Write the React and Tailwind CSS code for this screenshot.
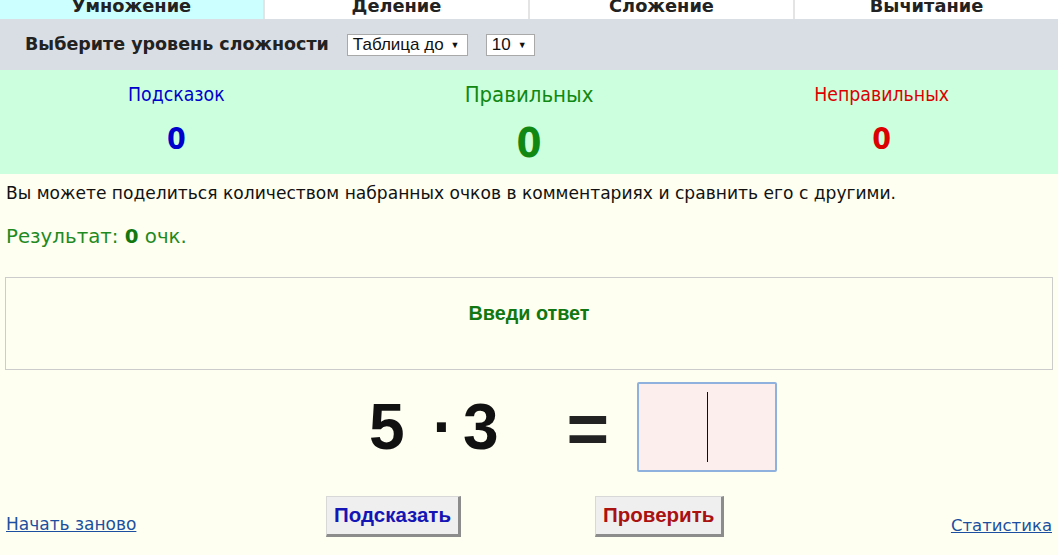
import React from "react";

const V = { fontFamily: '"DejaVu Sans", Verdana, sans-serif' };
const A = { fontFamily: '"Liberation Sans", Arial, sans-serif' };

function Tab({ label, active, last }) {
  return (
    <div
      className={`flex-1 h-[19px] overflow-hidden flex justify-center ${active ? "bg-[#ccffff]" : "bg-white"} ${last ? "" : "border-r-2 border-[#e4e4e4]"}`}
    >
      <span className="text-[17.8px] font-bold leading-[20px] -mt-[4px] text-[#222]" style={V}>
        {label}
      </span>
    </div>
  );
}

function Select({ text, w }) {
  return (
    <div
      className={`h-[22px] ${w} bg-white border border-[#a9a9a9] flex items-center pl-[5px] text-[17px] leading-[20px] text-[#111]`}
      style={A}
    >
      <span>{text}</span>
      <span className="text-[9px] ml-[7px]">▼</span>
    </div>
  );
}

function Stat({ label, value, color, big }) {
  return (
    <div className="flex-1 flex flex-col items-center">
      <div
        className={`font-stretch-condensed ${color} ${big ? "text-[22px] leading-[26px] mt-[12px]" : "text-[19.3px] leading-[22px] mt-[14px]"}`}
        style={V}
      >
        {label}
      </div>
      <div
        className={`font-bold font-stretch-condensed ${color} ${big ? "text-[40px] leading-[46px] mt-[12px]" : "text-[30px] leading-[34px] mt-[16px]"}`}
        style={V}
      >
        {value}
      </div>
    </div>
  );
}

function Btn({ children, color }) {
  return (
    <div
      className={`h-[41px] px-[7px] flex items-center bg-[#efefef] border-t border-l border-[#d8d8d8] border-r-[3px] border-b-[3px] border-r-[#8c8c8c] border-b-[#8c8c8c] text-[20.5px] font-bold ${color}`}
      style={A}
    >
      {children}
    </div>
  );
}

export default function App() {
  return (
    <div className="w-[1058px] h-[555px] overflow-hidden bg-[#fefff0]">
      <div className="flex">
        <Tab label="Умножение" active />
        <Tab label="Деление" />
        <Tab label="Сложение" />
        <Tab label="Вычитание" last />
      </div>
      <div className="h-[51px] bg-[#d9dee4] flex items-center pl-[25px]">
        <span className="text-[17.5px] font-bold text-[#222] mr-[18px]" style={V}>
          Выберите уровень сложности
        </span>
        <Select text="Таблица до" w="w-[121px]" />
        <div className="w-[18px]" />
        <Select text="10" w="w-[49px]" />
      </div>
      <div className="h-[104px] bg-[#ccffdd] flex">
        <Stat label="Подсказок" value="0" color="text-[#0000cc]" />
        <Stat label="Правильных" value="0" color="text-[#118811]" big />
        <Stat label="Неправильных" value="0" color="text-[#dd0000]" />
      </div>
      <div className="pl-[6px] pt-[8px] text-[17.1px] leading-[22px] text-[#111]" style={V}>
        Вы можете поделиться количеством набранных очков в комментариях и сравнить его с другими.
      </div>
      <div className="pl-[6px] pt-[21px] text-[19.8px] leading-[24px] text-[#1f8a1f]" style={V}>
        Результат: <b className="text-[#117711]">0</b> очк.
      </div>
      <div className="mx-[5px] mt-[28px] h-[93px] border border-[#cccccc] flex justify-center">
        <span className="mt-[21px] text-[19.8px] font-bold text-[#117711]" style={A}>
          Введи ответ
        </span>
      </div>
      <div className="flex items-center h-[90px] mt-[12px] pl-[369px]" style={A}>
        <span className="text-[64px] font-bold leading-none text-[#111]">5</span>
        <span className="text-[64px] font-bold leading-none text-[#111] ml-[28px]">·</span>
        <span className="text-[64px] font-bold leading-none text-[#111] ml-[9px]">3</span>
        <span className="text-[73px] font-bold leading-none text-[#222] ml-[68px]">=</span>
        <div className="ml-[28px] w-[140px] h-[90px] bg-[#fdeeee] border-2 border-[#8fb1dd] rounded-[2px] flex items-center justify-center">
          <div className="w-px h-[70px] bg-[#000080]" />
        </div>
      </div>
      <div className="flex items-end px-[6px] mt-[24px] h-[41px]">
        <div className="w-[320px] mb-[1px]">
          <a className="text-[17px] leading-[20px] text-[#1c4fa0] underline" style={V}>
            Начать заново
          </a>
        </div>
        <Btn color="text-[#1515b5]">Подсказать</Btn>
        <div className="w-[134px]" />
        <Btn color="text-[#aa1111]">Проверить</Btn>
        <div className="flex-1 flex justify-end mb-[1px]">
          <a className="text-[16.5px] leading-[20px] text-[#1c4fa0] underline" style={V}>
            Статистика
          </a>
        </div>
      </div>
    </div>
  );
}
